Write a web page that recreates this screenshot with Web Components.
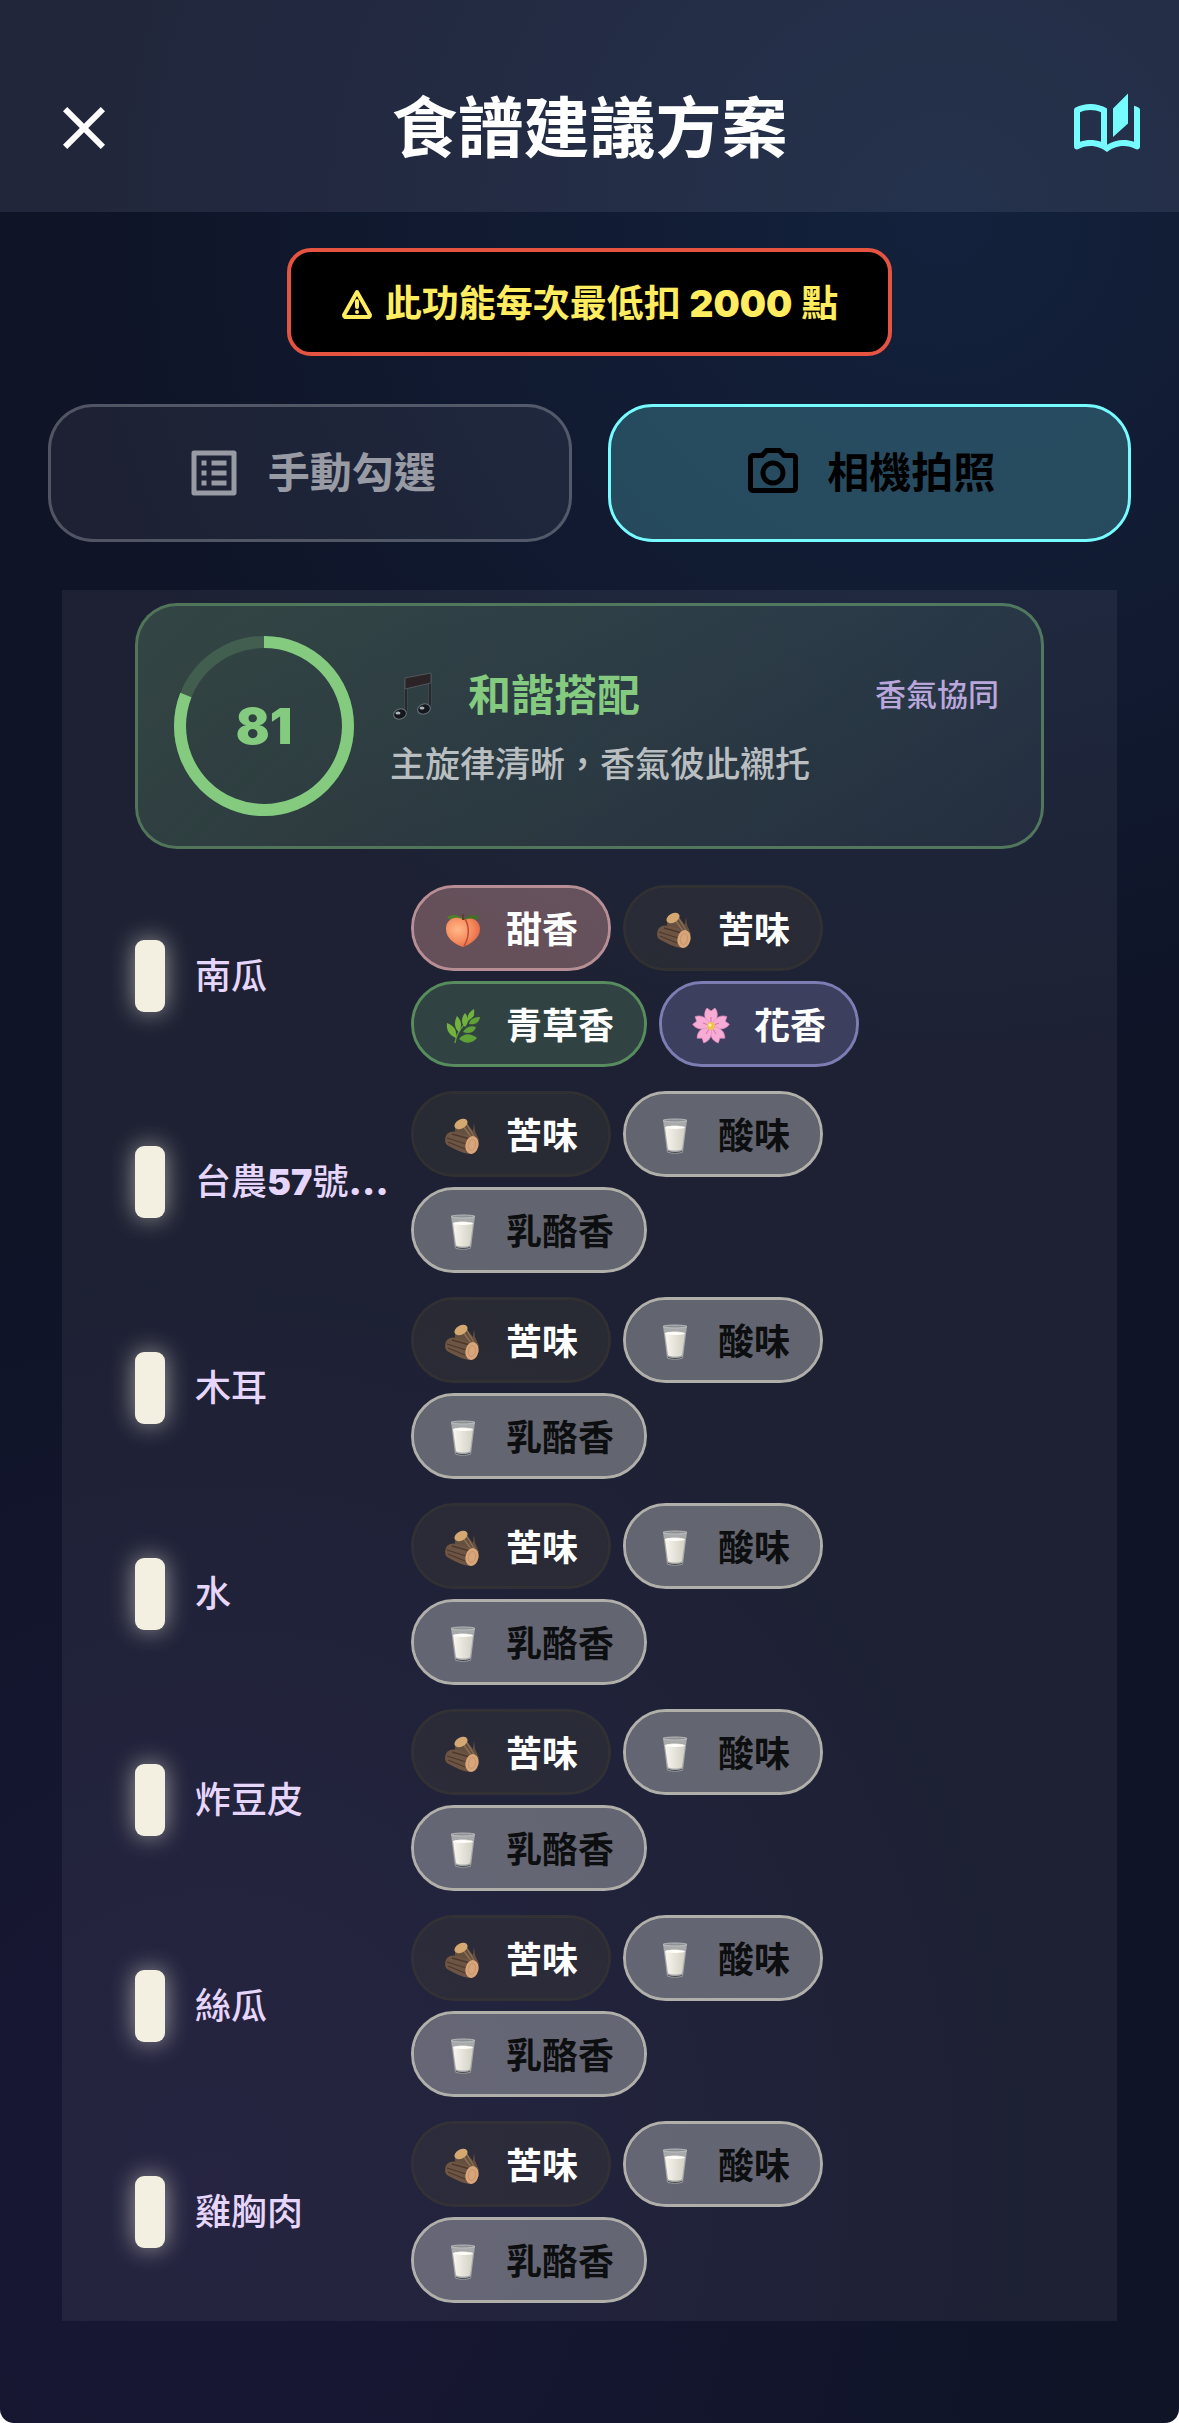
<!DOCTYPE html>
<html lang="zh-Hant">
<head>
<meta charset="utf-8">
<meta name="viewport" content="width=device-width, initial-scale=1">
<title>食譜建議方案</title>
<style>
  html, body{ margin: 0; background: #fff; }
  body{ font-family: Inter, "Noto Sans CJK TC", sans-serif; }
</style>
</head>
<body>

<recipe-page>
  <app-header slot="header">食譜建議方案</app-header>
  <point-notice>此功能每次最低扣 <b>2000</b> 點</point-notice>
  <mode-tabs>
    <mode-tab icon="list">手動勾選</mode-tab>
    <mode-tab icon="camera" active>相機拍照</mode-tab>
  </mode-tabs>
  <aroma-panel>
    <harmony-card score="81" heading="和諧搭配" tag="香氣協同">主旋律清晰，香氣彼此襯托</harmony-card>
    <ingredient-row name="南瓜">
      <flavor-chip kind="sweet">甜香</flavor-chip>
      <flavor-chip kind="bitter">苦味</flavor-chip>
      <flavor-chip kind="grass">青草香</flavor-chip>
      <flavor-chip kind="floral">花香</flavor-chip>
    </ingredient-row>
    <ingredient-row name="台農57號…">
      <flavor-chip kind="bitter">苦味</flavor-chip>
      <flavor-chip kind="milk">酸味</flavor-chip>
      <flavor-chip kind="milk">乳酪香</flavor-chip>
    </ingredient-row>
    <ingredient-row name="木耳">
      <flavor-chip kind="bitter">苦味</flavor-chip>
      <flavor-chip kind="milk">酸味</flavor-chip>
      <flavor-chip kind="milk">乳酪香</flavor-chip>
    </ingredient-row>
    <ingredient-row name="水">
      <flavor-chip kind="bitter">苦味</flavor-chip>
      <flavor-chip kind="milk">酸味</flavor-chip>
      <flavor-chip kind="milk">乳酪香</flavor-chip>
    </ingredient-row>
    <ingredient-row name="炸豆皮">
      <flavor-chip kind="bitter">苦味</flavor-chip>
      <flavor-chip kind="milk">酸味</flavor-chip>
      <flavor-chip kind="milk">乳酪香</flavor-chip>
    </ingredient-row>
    <ingredient-row name="絲瓜">
      <flavor-chip kind="bitter">苦味</flavor-chip>
      <flavor-chip kind="milk">酸味</flavor-chip>
      <flavor-chip kind="milk">乳酪香</flavor-chip>
    </ingredient-row>
    <ingredient-row name="雞胸肉">
      <flavor-chip kind="bitter">苦味</flavor-chip>
      <flavor-chip kind="milk">酸味</flavor-chip>
      <flavor-chip kind="milk">乳酪香</flavor-chip>
    </ingredient-row>
  </aroma-panel>
</recipe-page>

<script>
// Line icons, 24x24 grid
const ICONS = {
  close: '<path d="M19 6.41 17.59 5 12 10.59 6.41 5 5 6.41 10.59 12 5 17.59 6.41 19 12 13.41 17.59 19 19 17.59 13.41 12z"/>',
  book: '<path d="M22.47 5.2c-.47-.24-.96-.44-1.47-.61v12.03c-1.14-.41-2.31-.62-3.5-.62-1.9 0-3.78.54-5.5 1.58V5.48C10.38 4.55 8.51 4 6.5 4c-1.79 0-3.48.44-4.97 1.2-.33.16-.53.51-.53.88v12.08c0 .58.47.99 1 .99.16 0 .32-.04.48-.12C3.69 18.4 5.05 18 6.5 18c2.07 0 3.98.82 5.5 2 1.52-1.18 3.43-2 5.5-2 1.45 0 2.81.4 4.02 1.04.16.08.32.12.48.12.52 0 1-.41 1-.99V6.08c0-.37-.2-.72-.53-.88zM10 16.62C8.86 16.21 7.69 16 6.5 16s-2.36.21-3.5.62V6.71C4.11 6.24 5.28 6 6.5 6c1.2 0 2.39.25 3.5.72v9.9zM19 .5l-5 5V15l5-4.5V.5z"/>',
  list: '<path d="M19 5v14H5V5h14m1.1-2H3.9c-.5 0-.9.4-.9.9v16.2c0 .4.4.9.9.9h16.2c.4 0 .9-.5.9-.9V3.9c0-.5-.5-.9-.9-.9zM11 7h6v2h-6V7zm0 4h6v2h-6v-2zm0 4h6v2h-6zM7 7h2v2H7zm0 4h2v2H7zm0 4h2v2H7z"/>',
  camera: '<path d="M14.12 4l1.83 2H20v12H4V6h4.05l1.83-2h4.24M15 2H9L7.17 4H4c-1.1 0-2 .9-2 2v12c0 1.1.9 2 2 2h16c1.1 0 2-.9 2-2V6c0-1.1-.9-2-2-2h-3.17L15 2zm-3 7c1.65 0 3 1.35 3 3s-1.35 3-3 3-3-1.35-3-3 1.35-3 3-3m0-2c-2.76 0-5 2.24-5 5s2.24 5 5 5 5-2.24 5-5-2.24-5-5-5z"/>'
};

const svgIcon = name => `<svg viewBox="0 0 24 24" fill="currentColor" aria-hidden="true">${ICONS[name]}</svg>`;

// Small colour drawings in the chips, 38x38 grid
const PICTURES = {
  sweet: `
    <defs><radialGradient id="p" cx=".35" cy=".4" r=".75">
      <stop offset="0" stop-color="#ffb98a"/><stop offset=".6" stop-color="#f5875a"/><stop offset="1" stop-color="#dc5f42"/>
    </radialGradient></defs>
    <path d="M19 8C14 3 7 3 3 6c3 4 10 5 16 3z" fill="#527f2c"/>
    <path d="M20 8c4-5 11-5 15-2-3 4-9 5-15 3z" fill="#456f27"/>
    <path d="M19 36C10 33 2 27 2 18 2 10 8 6 14 7c3 0 5 1 7 2 7-4 15 1 15 9 0 9-9 15-17 18z" fill="url(#p)"/>
    <path d="M21 8c5 8 4 19-1 27" fill="none" stroke="#b94f34" stroke-width="1.5"/>
    <path d="M19 3v6" stroke="#5b4324" stroke-width="2"/>`,
  bitter: `
    <path d="M11 9l9-6 9 11 1-8 1 8 4 9-8 6-16-9z" fill="#65503f"/>
    <path d="M22 6l9 15M19 9l9 12" stroke="#8b6f56" stroke-width="1.4"/>
    <ellipse cx="17" cy="7" rx="7" ry="4.500" transform="rotate(-28 17 7)" fill="#d3a971"/>
    <path d="M3 17c3-3 7-3 10-2l17 5-2 17c-9 0-18-5-25-9-3-3-2-8 0-11z" fill="#6e5543"/>
    <path d="M3 21l19 6M4 25l17 7M8 17l18 5" stroke="#4b392d" stroke-width="1.3"/>
    <ellipse cx="28" cy="28" rx="6.500" ry="9" transform="rotate(12 28 28)" fill="#d8a67a"/>
    <ellipse cx="28" cy="28" rx="3.500" ry="5.500" transform="rotate(12 28 28)" fill="none" stroke="#c48f66" stroke-width=".8"/>`,
  grass: `
    <path d="M11 36c1-10 8-19 19-28" fill="none" stroke="#5d9a37" stroke-width="1.6"/>
    <g fill="#73b33d">
      <path d="M30 2c1 6-1 9-6 11-1-5 1-8 6-11z"/><path d="M21 6c4 5 4 9 0 14-4-4-4-9 0-14z"/>
      <path d="M13 9c5 5 5 10 2 16-5-4-5-10-2-16z"/><path d="M3 16c8 3 10 8 9 15-7-3-10-8-9-15z"/>
    </g>
    <g fill="#5fa038">
      <path d="M36 10c-1 6-5 8-11 7 1-5 5-7 11-7z"/><path d="M32 20c-2 6-7 7-13 5 3-5 7-7 13-5z"/>
      <path d="M33 31c-5 6-12 6-18 1 5-6 11-6 18-1z"/>
    </g>`,
  floral: `
    <defs><path id="f" d="M19 19C12 13 11 6 15 1l4 3 4-3c4 5 3 12-4 18z"/></defs>
    <g fill="#f7acd6" stroke="#e48cbc" stroke-width=".6">
      <use href="#f"/><use href="#f" transform="rotate(72 19 19)"/><use href="#f" transform="rotate(144 19 19)"/>
      <use href="#f" transform="rotate(216 19 19)"/><use href="#f" transform="rotate(288 19 19)"/>
    </g>
    <g stroke="#c95792" stroke-width=".7">
      <path d="M19 19V10M19 19l8-3M19 19l5 8M19 19l-5 8M19 19l-8-3"/>
    </g>
    <circle cx="19" cy="19" r="4" fill="#eec153"/><circle cx="18" cy="18" r="1.6" fill="#fff0a0"/>`,
  milk: `
    <defs><linearGradient id="m"><stop offset="0" stop-color="#f8f6ee"/><stop offset="1" stop-color="#d3d0c5"/></linearGradient></defs>
    <path d="M7 3h24l-4 32c-2 2-14 2-16 0z" fill="#a7a9ab"/>
    <path d="M9 10c5-2 15-2 20 0l-3 22c-2 2-12 2-14 0z" fill="url(#m)"/>
    <ellipse cx="19" cy="10.500" rx="10" ry="1.500" fill="#fffefa"/>
    <ellipse cx="19" cy="3.500" rx="12" ry="1.500" fill="#8e9194" stroke="#c5c6c6" stroke-width=".8"/>
    <path d="M11.500 34c3 2 12 2 15 0" fill="none" stroke="#4a4c50" stroke-width="1"/>`
};

/** Base: puts the class template in an open shadow root */
class BaseElement extends HTMLElement {
  connectedCallback(){
    if (this.shadowRoot) return;
    this.attachShadow({mode: 'open'}).innerHTML = this.render();
  }
}

class RecipePage extends BaseElement {
  render(){
    return `
    <style>
      :host{
        display: flex;
        flex-direction: column;
        box-sizing: border-box;
        min-height: 100vh;
        border-radius: 0 0 14px 14px;
        background:
          radial-gradient(ellipse 75% 35% at 80% 9%, rgba(22,42,74,.6), transparent),
          radial-gradient(ellipse 75% 40% at 18% 90%, rgba(33,26,66,.55), transparent),
          #0f1427;
      }
      main{
        display: flex;
        flex-direction: column;
        gap: 48px;
        padding: 36px 48px 48px;
      }
    </style>
    <slot name="header"></slot>
    <main><slot></slot></main>`;
  }
}

class AppHeader extends BaseElement {
  render(){
    return `
    <style>
      :host{
        display: grid;
        grid-template-columns: 1fr auto 1fr;
        align-items: center;
        box-sizing: border-box;
        height: 212px;
        padding: 44px 36px 0;
        background: rgba(220,222,255,.09);
        color: #fff;
      }
      h1{ margin: 0; font-size: 66px; line-height: 84px; font-weight: 700; }
      button{ justify-self: end; padding: 0; border: 0; background: none; color: #76fcff; cursor: pointer; }
      .close{ justify-self: start; padding-left: 12px; color: inherit; }
      svg{ display: block; width: 72px; height: 72px; }
    </style>
    <button type="button" class="close" aria-label="關閉">${svgIcon('close')}</button>
    <h1><slot></slot></h1>
    <button type="button" aria-label="食譜">${svgIcon('book')}</button>`;
  }
}

class PointNotice extends BaseElement {
  render(){
    return `
    <style>
      :host{
        display: flex;
        align-items: center;
        align-self: center;
        gap: 12px;
        box-sizing: border-box;
        min-height: 108px;
        padding: 3px 50px 0;
        border: 4px solid #e55341;
        border-radius: 24px;
        background: #000;
        color: #ffec5f;
        font-size: 37px;
        line-height: 48px;
        font-weight: 700;
      }
      svg{ width: 32px; height: 32px; }
      ::slotted(b){ font-weight: 900; }
    </style>
    <svg viewBox="0 0 32 32" aria-hidden="true">
      <path d="M16 4 29 27a2 2 0 0 1-1 2H4a2 2 0 0 1-1-2z" fill="none" stroke="currentColor" stroke-width="4" stroke-linejoin="round"/>
      <path d="M16 13v6" stroke="currentColor" stroke-width="4" stroke-linecap="round"/>
      <circle cx="16" cy="24" r="2" fill="currentColor"/>
    </svg>
    <span><slot></slot></span>`;
  }
}

class ModeTabs extends BaseElement {
  render(){
    return `
    <style>
      :host{ display: flex; gap: 36px; }
      ::slotted(*){ flex: 1; }
    </style>
    <slot></slot>`;
  }
}

class ModeTab extends BaseElement {
  render(){
    return `
    <style>
      :host{ display: block; }
      button{
        display: flex;
        align-items: center;
        justify-content: center;
        gap: 24px;
        box-sizing: border-box;
        width: 100%;
        height: 138px;
        padding: 0;
        border: 3px solid rgba(255,255,255,.28);
        border-radius: 45px;
        background: rgba(255,255,255,.06);
        background-clip: padding-box;
        color: #989ba4;
        font: inherit;
        font-size: 42px;
        line-height: 60px;
        font-weight: 700;
        cursor: pointer;
      }
      svg{ width: 60px; height: 60px; }
      :host([active]) button{
        border-color: #76fcff;
        background-color: rgba(118,252,255,.21);
        color: #000;
      }
    </style>
    <button type="button" aria-pressed="${this.hasAttribute('active')}">
      ${svgIcon(this.getAttribute('icon'))}
      <span><slot></slot></span>
    </button>`;
  }
}

class AromaPanel extends BaseElement {
  render(){
    return `
    <style>
      :host{
        display: flex;
        flex-direction: column;
        gap: 24px;
        margin: 0 14px;
        padding: 13px 73px 18px;
        background: rgba(255,255,255,.06);
      }
    </style>
    <slot></slot>`;
  }
}

class HarmonyCard extends BaseElement {
  render(){
    const score = Number(this.getAttribute('score'));
    return `
    <style>
      :host{
        display: flex;
        align-items: center;
        gap: 36px;
        margin-bottom: 12px;
        padding: 30px 42px 30px 36px;
        border: 3px solid rgba(132,201,127,.5);
        border-radius: 42px;
        background: linear-gradient(135deg, rgba(132,201,127,.22), rgba(132,201,180,.06));
        background-clip: padding-box;
      }
      .ring{ flex: none; display: grid; place-items: center; width: 180px; height: 180px; color: #84cb80; }
      .ring > *{ grid-area: 1 / 1; }
      .ring b{ font-size: 50px; line-height: 60px; font-weight: 900; }
      .text{ flex: 1; display: flex; flex-direction: column; gap: 12px; padding-top: 4px; }
      .top{ display: flex; align-items: center; }
      .note{ width: 48px; height: 54px; margin-right: 30px; }
      h2{ flex: 1; margin: 0; color: #84cb80; font-size: 43px; line-height: 60px; font-weight: 700; }
      .tag{ color: #b9a7dc; font-size: 31px; line-height: 48px; font-weight: 500; }
      p{ margin: 0; color: #b9bec1; font-size: 35px; line-height: 54px; font-weight: 500; }
    </style>
    <div class="ring">
      <svg width="180" height="180" viewBox="0 0 180 180" fill="none" stroke="#84cb80" stroke-width="12" aria-hidden="true">
        <circle cx="90" cy="90" r="84" stroke-opacity=".2"/>
        <circle cx="90" cy="90" r="84" pathLength="100" stroke-dasharray="${score} 100" transform="rotate(-90 90 90)"/>
      </svg>
      <b>${score}</b>
    </div>
    <div class="text">
      <div class="top">
        <svg class="note" viewBox="0 0 48 54" aria-hidden="true">
          <path d="M16 43V13l24-5v30" fill="none" stroke="#55606a" stroke-width="2.600"/>
          <path d="M16 43V13l24-5v30" fill="none" stroke="#201b1e" stroke-width="1.600"/>
          <path d="M15 10l26-5v10l-26 6z" fill="#2b2325" stroke="#59616a" stroke-width=".8"/>
          <ellipse cx="10" cy="46" rx="6.500" ry="5" transform="rotate(-18 10 46)" fill="#14171b" stroke="#69747d"/>
          <ellipse cx="34" cy="41" rx="6.500" ry="5" transform="rotate(-18 34 41)" fill="#14171b" stroke="#69747d"/>
          <ellipse cx="8" cy="45" rx="2.500" ry="1.500" fill="#aab4bb"/>
          <ellipse cx="32" cy="40" rx="2.500" ry="1.500" fill="#aab4bb"/>
        </svg>
        <h2>${this.getAttribute('heading')}</h2>
        <span class="tag">${this.getAttribute('tag')}</span>
      </div>
      <p><slot></slot></p>
    </div>`;
  }
}

class IngredientRow extends BaseElement {
  render(){
    return `
    <style>
      :host{ display: flex; align-items: center; }
      .bar{
        flex: none;
        width: 30px;
        height: 72px;
        border-radius: 9px;
        background: #f4f0e1;
        box-shadow: 0 0 24px rgba(244,240,225,.6);
      }
      .name{
        flex: none;
        width: 201px;
        margin: 0 15px 0 30px;
        white-space: nowrap;
        color: #e6d6fc;
        font-size: 36px;
        line-height: 54px;
        font-weight: 500;
      }
      .name b{ font-weight: 900; }
      .chips{ flex: 1; display: flex; flex-wrap: wrap; gap: 10px 12px; }
    </style>
    <span class="bar"></span>
    <span class="name">${this.getAttribute('name').replace(/\d+|…/g, '<b>$&</b>')}</span>
    <div class="chips"><slot></slot></div>`;
  }
}

class FlavorChip extends BaseElement {
  render(){
    return `
    <style>
      :host{
        display: flex;
        align-items: center;
        gap: 24px;
        box-sizing: border-box;
        height: 86px;
        padding: 3px 30px 0;
        border: 3px solid var(--edge);
        border-radius: 43px;
        background: var(--fill);
        background-clip: padding-box;
        color: #fff;
        font-size: 36px;
        line-height: 54px;
        font-weight: 700;
      }
      :host([kind=sweet]){ --fill: rgba(255,180,175,.32); --edge: #b78e93; }
      :host([kind=bitter]){ --fill: rgba(62,60,54,.35); --edge: rgba(62,58,50,.6); }
      :host([kind=grass]){ --fill: rgba(106,170,110,.25); --edge: #588b5e; }
      :host([kind=floral]){ --fill: rgba(137,133,196,.3); --edge: #7d7db3; }
      :host([kind=milk]){ --fill: rgba(240,240,235,.33); --edge: #b0afaa; color: #0d0e0f; }
      svg{ width: 38px; height: 38px; }
    </style>
    <svg viewBox="0 0 38 38" aria-hidden="true">${PICTURES[this.getAttribute('kind')]}</svg>
    <span><slot></slot></span>`;
  }
}

customElements.define('recipe-page', RecipePage);
customElements.define('app-header', AppHeader);
customElements.define('point-notice', PointNotice);
customElements.define('mode-tabs', ModeTabs);
customElements.define('mode-tab', ModeTab);
customElements.define('aroma-panel', AromaPanel);
customElements.define('harmony-card', HarmonyCard);
customElements.define('ingredient-row', IngredientRow);
customElements.define('flavor-chip', FlavorChip);
</script>
</body>
</html>
